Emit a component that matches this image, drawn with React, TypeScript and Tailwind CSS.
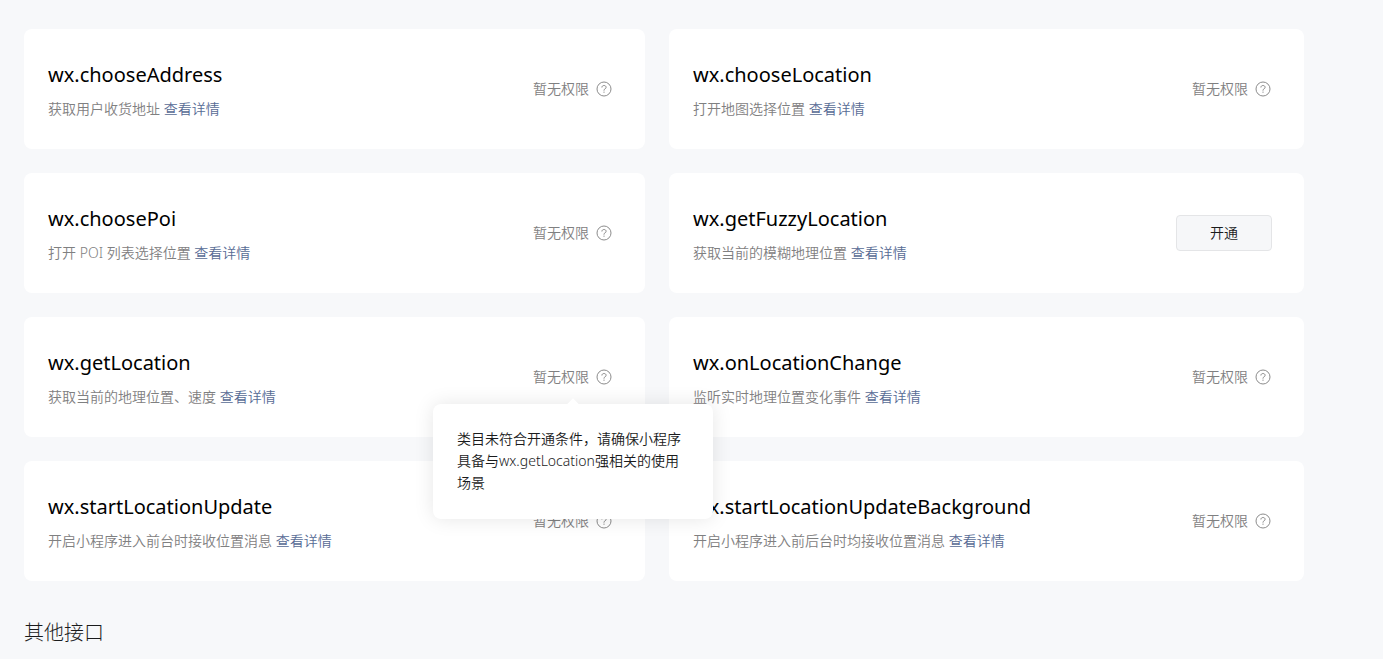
type Api = {
  name: string;
  desc: string;
  canOpen?: boolean;
  tip?: string;
};

const apis: Api[] = [
  { name: "wx.chooseAddress", desc: "获取用户收货地址" },
  { name: "wx.chooseLocation", desc: "打开地图选择位置" },
  { name: "wx.choosePoi", desc: "打开 POI 列表选择位置" },
  { name: "wx.getFuzzyLocation", desc: "获取当前的模糊地理位置", canOpen: true },
  {
    name: "wx.getLocation",
    desc: "获取当前的地理位置、速度",
    tip: "类目未符合开通条件，请确保小程序具备与wx.getLocation强相关的使用场景",
  },
  { name: "wx.onLocationChange", desc: "监听实时地理位置变化事件" },
  { name: "wx.startLocationUpdate", desc: "开启小程序进入前台时接收位置消息" },
  { name: "wx.startLocationUpdateBackground", desc: "开启小程序进入前后台时均接收位置消息" },
];

const HelpIcon = () => (
  <svg className="h-4 w-4" viewBox="0 0 16 16" fill="none" stroke="#8c8c8c" aria-hidden="true">
    <circle cx="8" cy="8" r="7" />
    <path d="M5.900 6.500C5.900 5.200 6.800 4.500 8 4.500s2.100.7 2.100 1.800c0 .8-.5 1.200-1.100 1.600C8.300 8.300 8 8.600 8 9.300v.4" />
    <path d="M8 10.600v1.200" />
  </svg>
);

const Tooltip = ({ text }: { text: string }) => (
  <div
    role="tooltip"
    className="absolute left-1/2 top-full z-10 mt-4 w-[280px] -translate-x-1/2 rounded-lg bg-white px-6 pt-6 pb-[25px] leading-[22px] text-[#1a1b1c] shadow-[0_0_20px_rgba(0,0,0,0.1)]"
  >
    <span className="absolute -top-1 left-1/2 h-2 w-2 -translate-x-1/2 rotate-45 bg-white" />
    {text}
  </div>
);

const Status = ({ tip }: { tip?: string }) => (
  <div className="relative flex shrink-0 items-center gap-[7px] pr-px leading-[22px] text-[#7f8081]">
    <span>暂无权限</span>
    <button type="button" aria-label="查看原因">
      <HelpIcon />
    </button>
    {tip && <Tooltip text={tip} />}
  </div>
);

const ApiCard = ({ name, desc, canOpen, tip }: Api) => (
  <li className="flex items-center justify-between rounded-lg bg-white py-[30px] pl-6 pr-8">
    <div>
      <h3 className="text-xl font-normal leading-8 text-black">{name}</h3>
      <p className="mt-2 leading-5 text-[#7f8081]">
        {desc}{" "}
        <a href="#" className="text-[#576b95]">
          查看详情
        </a>
      </p>
    </div>
    {canOpen ? (
      <button
        type="button"
        className="h-9 w-24 shrink-0 rounded border border-[#e4e5e7] bg-[#f6f7f9] text-[#1a1b1c]"
      >
        开通
      </button>
    ) : (
      <Status tip={tip} />
    )}
  </li>
);

export default function App() {
  return (
    <main className="min-h-screen bg-[#f7f8fa] pl-6 pr-[79px] pt-[29px] font-['Noto_Sans','Noto_Sans_CJK_SC',sans-serif] text-sm font-[350]">
      <ul className="grid grid-cols-[621fr_635fr] gap-6">
        {apis.map((api) => (
          <ApiCard key={api.name} {...api} />
        ))}
      </ul>
      <h2 className="mt-9 text-xl font-light leading-8 text-[#1a1b1c]">其他接口</h2>
    </main>
  );
}
